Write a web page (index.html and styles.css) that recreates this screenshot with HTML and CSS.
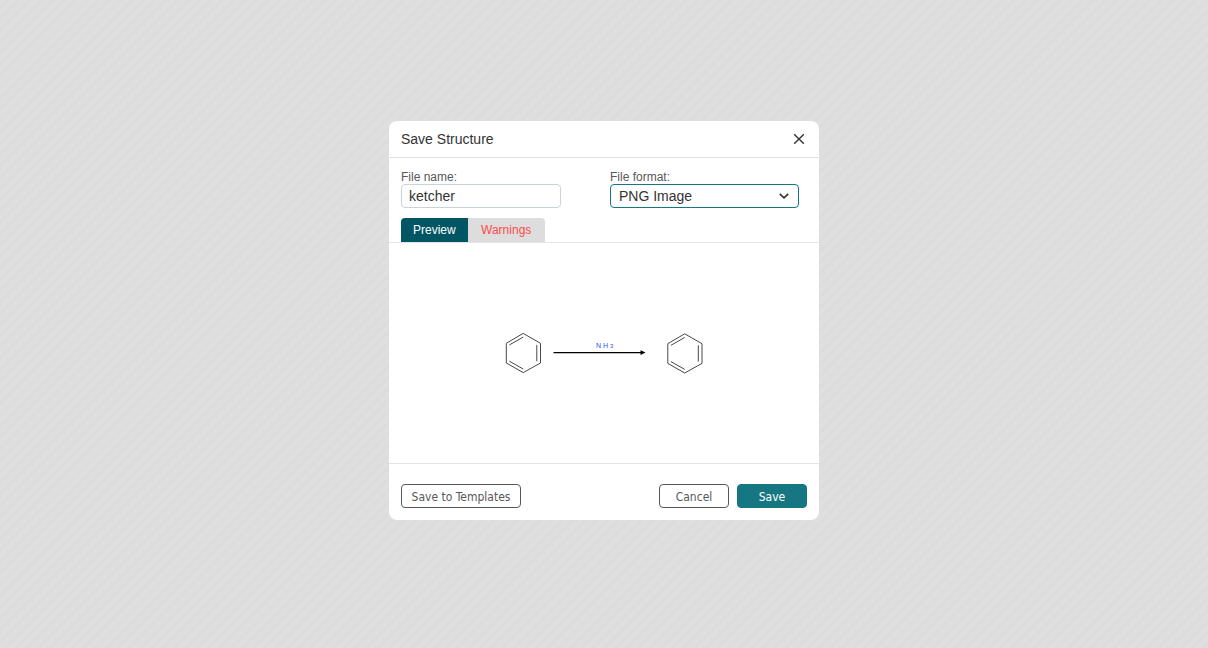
FILE: index.html
```
<!DOCTYPE html>
<html lang="en">
<head>
<meta charset="utf-8">
<meta name="viewport" content="width=device-width, initial-scale=1">
<title>Save Structure</title>
<link rel="stylesheet" href="styles.css">
</head>
<body>
<main class="overlay">
  <form class="dialog" role="dialog" aria-labelledby="dialog-title">
    <header class="dialog-header">
      <h1 class="dialog-title" id="dialog-title">Save Structure</h1>
      <button class="close" type="button" aria-label="Close">
        <svg width="12" height="12" viewBox="0 0 12 12"><path d="M1.2 1.2l9.6 9.6M10.8 1.2l-9.6 9.6" fill="none" stroke="#333" stroke-width="1.4"/></svg>
      </button>
    </header>
    <div class="fields">
      <div class="field field-name">
        <label for="file-name">File name:</label>
        <input class="control" id="file-name" type="text" value="ketcher">
      </div>
      <div class="field field-format">
        <label for="file-format">File format:</label>
        <div class="select-wrap">
          <select class="control select" id="file-format"><option>PNG Image</option></select>
          <svg class="chevron" width="10" height="6" viewBox="0 0 10 6"><path d="M.8.8L5 4.8 9.2.8" fill="none" stroke="#333" stroke-width="1.6"/></svg>
        </div>
      </div>
    </div>
    <div class="tabs" role="tablist">
      <button class="tab tab-active" type="button" role="tab" aria-selected="true">Preview</button>
      <button class="tab tab-warning" type="button" role="tab" aria-selected="false">Warnings</button>
    </div>
    <div class="preview" role="tabpanel">
      <svg class="reaction" width="200" height="44" viewBox="0 0 200 44" role="img" aria-label="Benzene to benzene over NH3">
        <defs>
          <g id="ring" fill="none" stroke="#333" stroke-width=".9">
            <path d="M19.2 2.4L36.5 12.3V32L19.2 41.6 2.3 32V12.3Z"/>
            <path d="M19.2 6.1L5.4 13.9M32.8 13.9V30.2M19.2 38L5.4 30.2"/>
          </g>
        </defs>
        <use href="#ring"/>
        <use href="#ring" x="161.5" y=".4"/>
        <path d="M49.5 21.6H138" stroke="#000" stroke-width="1.4"/>
        <path d="M136.5 19.2L141.5 21.6 136.5 24Z"/>
        <text class="reagent" x="92" y="17">N</text>
        <text class="reagent" x="99" y="17">H</text>
        <text class="reagent-index" x="106" y="17">3</text>
      </svg>
    </div>
    <footer class="dialog-footer">
      <button class="button button-templates" type="button">Save to Templates</button>
      <div class="actions">
        <button class="button" type="button">Cancel</button>
        <button class="button button-primary" type="submit">Save</button>
      </div>
    </footer>
  </form>
</main>
</body>
</html>
```
FILE: styles.css
```
* { box-sizing: border-box; }

body {
  margin: 0;
  font-family: "Liberation Sans", Arial, sans-serif;
  color: #333;
  background: repeating-linear-gradient(135deg, #dfdfdf 0 3px, #dcdcdc 5px 6px, #dfdfdf 8px);
}

button, input, select { font: inherit; color: inherit; margin: 0; }

.overlay {
  min-height: 100vh;
  padding-bottom: 8px;
  display: flex;
  align-items: center;
  justify-content: center;
}

.dialog {
  width: 430px;
  max-width: 100%;
  background: #fff;
  border-radius: 8px;
  overflow: hidden;
}

.dialog-header {
  display: flex;
  align-items: center;
  justify-content: space-between;
  padding: 10px 12px;
  border-bottom: 1px solid #e1e1e1;
}

.dialog-title {
  margin: 0;
  font-size: 14px;
  font-weight: 400;
  line-height: 16px;
}

.close {
  display: flex;
  padding: 2px;
  border: 0;
  background: none;
}

.fields {
  display: flex;
  justify-content: space-between;
  padding: 12px 20px 10px 12px;
}

.field { display: flex; flex-direction: column; }
.field-name { width: 160px; }
.field-format { width: 189px; }

.field label {
  font-size: 12px;
  line-height: 14px;
  color: #585858;
}

.control {
  width: 100%;
  height: 24px;
  padding: 0 7px;
  border: 1px solid #cad3dd;
  border-radius: 4px;
  background: #fff;
  font-size: 14px;
  outline: none;
}

.select-wrap { position: relative; }

.select {
  display: block;
  padding: 0 8px;
  border-color: #167782;
  appearance: none;
}

.chevron {
  position: absolute;
  top: 9px;
  right: 10px;
  pointer-events: none;
}

.tabs { display: flex; padding: 0 12px; }

.tab {
  height: 24px;
  padding: 0 12px;
  border: 0;
  font-size: 12px;
}

.tab-active {
  background: #005662;
  color: #fff;
  border-radius: 4px 0 0 0;
}

.tab-warning {
  min-width: 77px;
  background: #ddd;
  color: #ff4a4a;
  border-radius: 0 4px 0 0;
}

.preview {
  display: flex;
  align-items: center;
  justify-content: center;
  min-height: 222px;
  border-top: 1px solid #e1e5ea;
  border-bottom: 1px solid #e1e5ea;
}

.reaction { display: block; }
.reagent { font-size: 7px; fill: #304ff7; }
.reagent-index { font-size: 6px; fill: #304ff7; }

.dialog-footer {
  display: flex;
  justify-content: space-between;
  padding: 20px 12px 12px;
}

.actions { display: flex; gap: 8px; }

.button {
  min-width: 70px;
  height: 24px;
  padding: 2px 8px 0;
  border: 1px solid #585858;
  border-radius: 4px;
  background: #fff;
  color: #585858;
  font-family: "DejaVu Sans Condensed", "DejaVu Sans", sans-serif;
  font-size: 12px;
}

.button-templates { min-width: 120px; }

.button-primary {
  border-color: #167782;
  background: #167782;
  color: #fff;
}
```
